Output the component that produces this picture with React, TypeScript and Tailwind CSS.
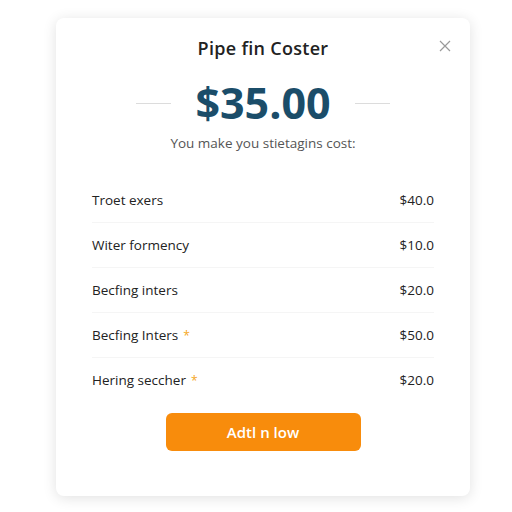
import React from "react";

const rows = [
  { label: "Troet exers", value: "$40.0", star: false },
  { label: "Witer formency", value: "$10.0", star: false },
  { label: "Becfing inters", value: "$20.0", star: false },
  { label: "Becfing Inters", value: "$50.0", star: true },
  { label: "Hering seccher", value: "$20.0", star: true },
];

const App = () => {
  return (
    <div
      className="w-[512px] h-[512px] bg-white pt-[18px] pl-[56px]"
      style={{ fontFamily: '"Open Sans", "Noto Sans", sans-serif' }}
    >
      {/* Card */}
      <div className="relative w-[414px] h-[478px] bg-white rounded-lg shadow-[0_2px_14px_rgba(0,0,0,0.12)] pt-[18px] flex flex-col items-center">
        <button className="absolute top-[22px] right-[19px] text-[#9a9a9a]">
          <svg width="12" height="12" viewBox="0 0 12 12" fill="none" stroke="currentColor" strokeWidth="1.2">
            <path d="M1 1L11 11M11 1L1 11" />
          </svg>
        </button>

        <h1 className="text-[18px] leading-[24px] font-semibold text-[#222] tracking-[0.3px]">
          Pipe fin Coster
        </h1>

        <div className="mt-[18px] flex items-center gap-[24px]">
          <div className="w-[35px] h-px bg-[#dcdcdc]" />
          <div className="text-[43px] leading-[50px] font-bold text-[#1b4d69]">
            $35.00
          </div>
          <div className="w-[35px] h-px bg-[#dcdcdc]" />
        </div>

        <p className="mt-[5px] text-[13.5px] leading-[20px] text-[#555]">
          You make you stietagins cost:
        </p>

        {/* Line items */}
        <div className="mt-[25px] w-full px-[36px]">
          {rows.map((row, i) => (
            <div
              key={i}
              className={`flex items-center justify-between h-[45px] text-[13.5px] text-[#222] ${
                i < rows.length - 1 ? "border-b border-[#f5f5f5]" : ""
              }`}
            >
              <span>
                {row.label}
                {row.star && <span className="ml-[5px] text-[#f5a623] text-[12px]">*</span>}
              </span>
              <span>{row.value}</span>
            </div>
          ))}
        </div>

        <button className="mt-[10px] w-[195px] h-[38px] rounded-md bg-[#f88c0c] text-white text-[15px] font-semibold">
          Adtl n low
        </button>
      </div>
    </div>
  );
};

export default App;
